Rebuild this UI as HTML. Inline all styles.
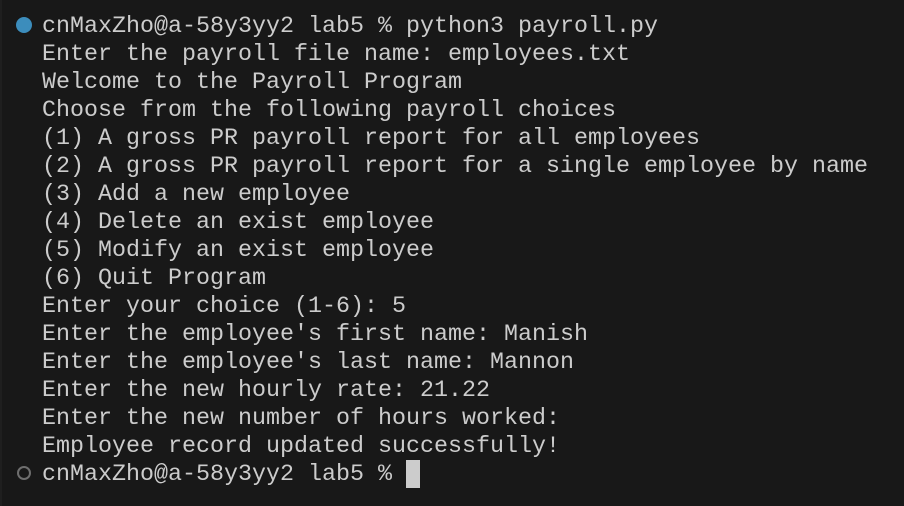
<!DOCTYPE html>
<html><head><style>
html,body{margin:0;padding:0;background:#181818;width:904px;height:506px;overflow:hidden}
.l{position:absolute;left:0;top:0;width:2px;height:506px;background:#1f1f1f}
pre{position:absolute;left:42px;top:13px;margin:0;font-family:"Liberation Mono",monospace;font-size:23.33px;line-height:28px;color:#cccccc;letter-spacing:0}
.d{position:absolute;left:16px;top:17px;width:16px;height:16px;border-radius:50%;background:#3c8dbc}
.o{position:absolute;left:17px;top:466px;width:10px;height:10px;border-radius:50%;border:2px solid #6e6e6e}
.c{position:absolute;left:406px;top:460px;width:14px;height:28px;background:#cccccc}
</style></head><body>
<div class="l"></div>
<div class="d"></div>
<div class="o"></div>
<pre>cnMaxZho@a-58y3yy2 lab5 % python3 payroll.py
Enter the payroll file name: employees.txt
Welcome to the Payroll Program
Choose from the following payroll choices
(1) A gross PR payroll report for all employees
(2) A gross PR payroll report for a single employee by name
(3) Add a new employee
(4) Delete an exist employee
(5) Modify an exist employee
(6) Quit Program
Enter your choice (1-6): 5
Enter the employee's first name: Manish
Enter the employee's last name: Mannon
Enter the new hourly rate: 21.22
Enter the new number of hours worked:
Employee record updated successfully!
cnMaxZho@a-58y3yy2 lab5 % </pre>
<div class="c"></div>
</body></html>
